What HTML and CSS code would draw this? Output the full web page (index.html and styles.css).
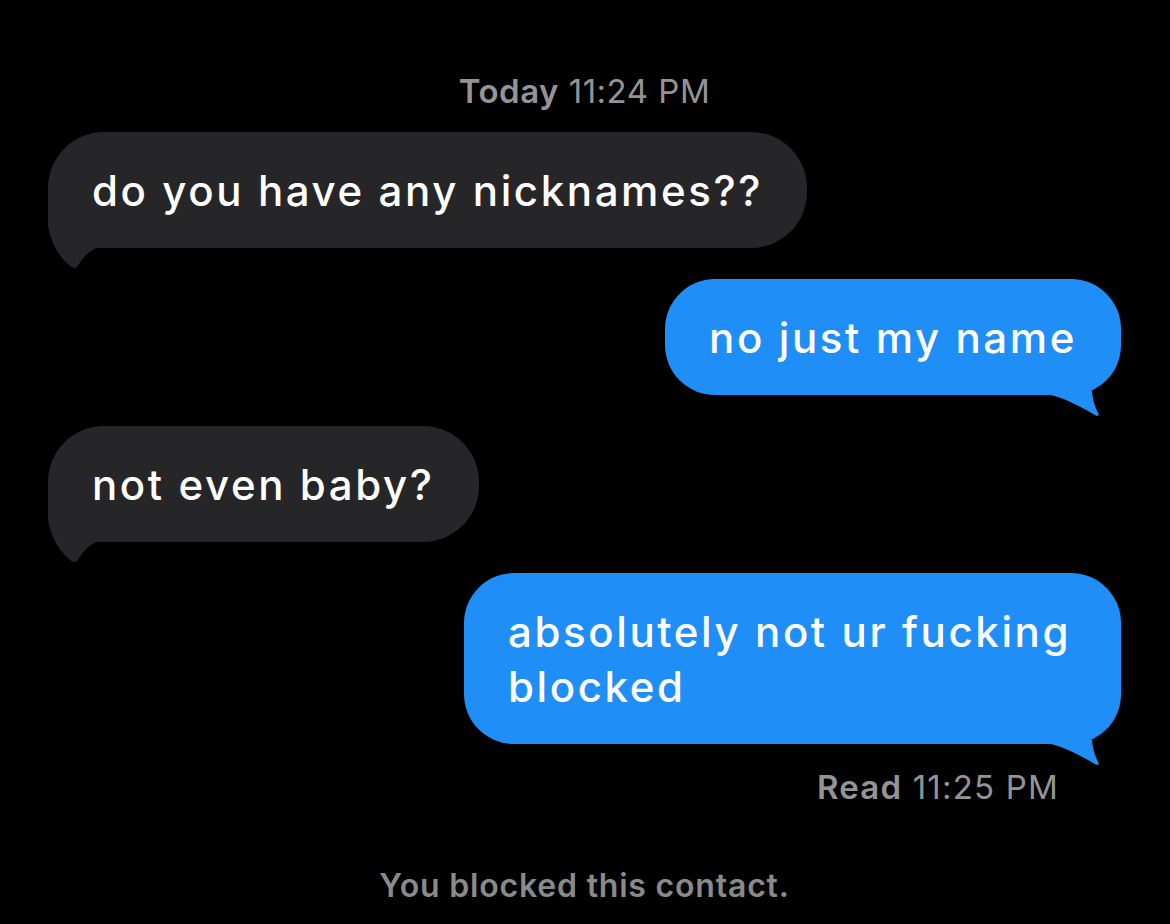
FILE: index.html
```html
<!DOCTYPE html>
<html lang="en">
<head>
  <meta charset="UTF-8">
  <meta name="viewport" content="width=device-width, initial-scale=1.0">
  <title>Messages</title>
  <link rel="stylesheet" href="styles.css">
</head>
<body>
  <div class="thread">
    <div class="stamp"><b>Today</b> 11:24 PM</div>

    <div class="row in">
      <div class="bubble">
        do you have any nicknames??
        <svg class="tail" viewBox="0 0 70 52"><path d="M0 0 C0 18, 8 36, 21 47 C24 50, 27 51, 29 49 C33 44, 36 36, 48 30 L70 30 L70 0 Z"/></svg>
      </div>
    </div>

    <div class="row out">
      <div class="bubble">
        no just my name
        <svg class="tail" viewBox="0 0 70 52"><path d="M0 30 C16 34, 32 43, 44 50 C46 51.5, 48.5 51, 47.5 48.5 C44.5 43, 42 37, 41 26 L0 20 Z"/></svg>
      </div>
    </div>

    <div class="row in">
      <div class="bubble">
        not even baby?
        <svg class="tail" viewBox="0 0 70 52"><path d="M0 0 C0 18, 8 36, 21 47 C24 50, 27 51, 29 49 C33 44, 36 36, 48 30 L70 30 L70 0 Z"/></svg>
      </div>
    </div>

    <div class="row out">
      <div class="bubble">
        absolutely not ur fucking blocked
        <svg class="tail" viewBox="0 0 70 52"><path d="M0 30 C16 34, 32 43, 44 50 C46 51.5, 48.5 51, 47.5 48.5 C44.5 43, 42 37, 41 26 L0 20 Z"/></svg>
      </div>
    </div>

    <div class="receipt"><b>Read</b> 11:25 PM</div>

    <div class="notice">You blocked this contact.</div>
  </div>
</body>
</html>
```

FILE: styles.css
```css
body, html {
  margin: 0;
  padding: 0;
  height: 100%;
  background: #000;
  font-family: Inter, "Noto Sans", sans-serif;
  overflow: hidden;
}

.thread {
  display: flex;
  flex-direction: column;
  padding: 70px 49px 0 48px;
}

.stamp {
  text-align: center;
  color: #949494;
  font-size: 33px;
  line-height: 42px;
  letter-spacing: 0.5px;
  margin-bottom: 20px;
}

.stamp b,
.receipt b {
  font-weight: 600;
}

.row {
  display: flex;
  margin-bottom: 31px;
}

.row.out {
  justify-content: flex-end;
}

.bubble {
  position: relative;
  box-sizing: border-box;
  padding: 31px 44px 30px;
  font-size: 42px;
  font-weight: 500;
  line-height: 55px;
  letter-spacing: 2.6px;
  color: #fff;
}

.in .bubble {
  background: #262628;
  border-radius: 56px 56px 56px 24px;
}

.out .bubble {
  max-width: 657px;
  background: #1f8ff7;
  border-radius: 50px;
}

/* little hook under the bubble corner */
.tail {
  position: absolute;
  bottom: -22px;
  width: 70px;
  height: 52px;
}

.in .tail {
  left: 0;
  fill: #262628;
}

.out .tail {
  right: 0;
  fill: #1f8ff7;
}

.row.out:has(+ .receipt) {
  margin-bottom: 22px;
}

.receipt {
  align-self: flex-end;
  margin-right: 62px;
  color: #949494;
  font-size: 33px;
  line-height: 42px;
  letter-spacing: 1.2px;
}

.notice {
  margin-top: 58px;
  text-align: center;
  color: #8a8a8a;
  font-size: 32px;
  font-weight: 600;
  line-height: 40px;
  letter-spacing: 0.8px;
}
```
